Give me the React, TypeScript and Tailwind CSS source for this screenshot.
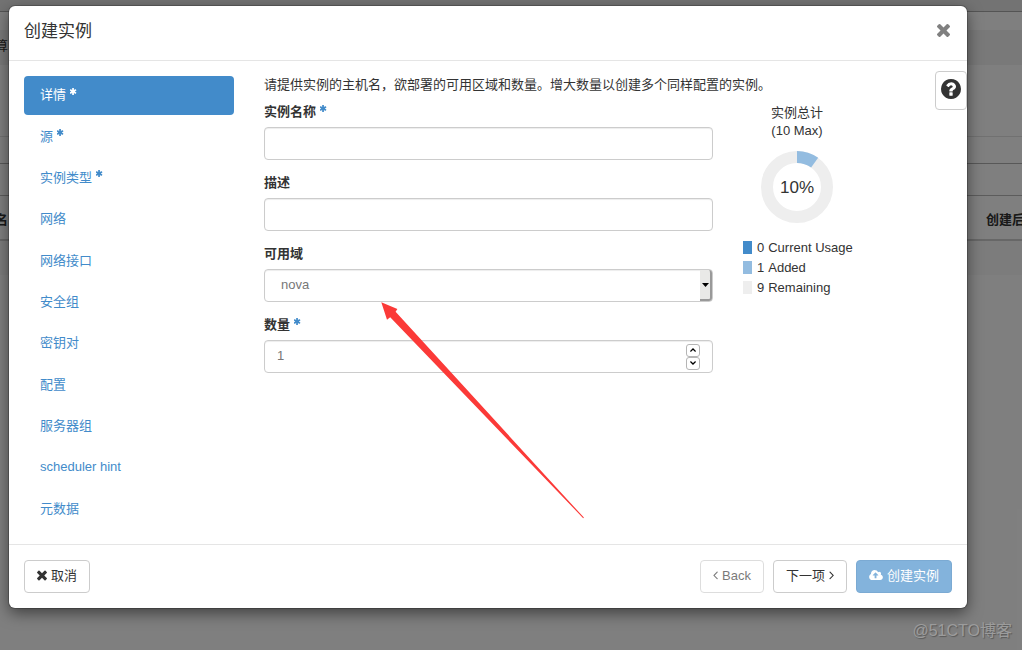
import { useState, type ReactNode } from "react";

const ICONS = {
  times:
    "M1490 1322q0 40-28 68l-136 136q-28 28-68 28t-68-28l-294-294-294 294q-28 28-68 28t-68-28l-136-136q-28-28-28-68t28-68l294-294-294-294q-28-28-28-68t28-68l136-136q28-28 68-28t68 28l294 294 294-294q28-28 68-28t68 28l136 136q28 28 28 68t-28 68l-294 294 294 294q28 28 28 68z",
  question:
    "M1024 1376v-192q0-14-9-23t-23-9h-192q-14 0-23 9t-9 23v192q0 14 9 23t23 9h192q14 0 23-9t9-23zm256-672q0-88-55.5-163t-138.5-116-170-41q-243 0-371 213-15 24 8 42l132 100q7 6 19 6 16 0 25-12 53-68 86-92 34-24 86-24 48 0 85.5 26t37.5 59q0 38-20 61t-68 45q-63 28-115.5 86.5t-52.5 125.5v36q0 14 9 23t23 9h192q14 0 23-9t9-23q0-19 21.5-49.5t54.5-49.5q32-18 49-28.5t46-35 44.5-48 28-60.5 12.5-81zm384 192q0 209-103 385.5t-279.5 279.5-385.5 103-385.5-103-279.5-279.5-103-385.5 103-385.5 279.5-279.5 385.5-103 385.5 103 279.5 279.5 103 385.5z",
  cloud:
    "M1216 864q0-14-9-23l-352-352q-9-9-23-9t-23 9l-351 351q-10 12-10 24 0 14 9 23t23 9h224v352q0 13 9.5 22.5t22.5 9.5h192q13 0 22.5-9.5t9.5-22.5v-352h224q13 0 22.5-9.5t9.5-22.5zm640 288q0 159-112.5 271.5t-271.5 112.5h-1088q-185 0-316.5-131.5t-131.5-316.5q0-130 70-240t188-165q-2-30-2-43 0-212 150-362t362-150q156 0 285.5 87t188.5 231q71-62 166-62 106 0 181 75t75 181q0 76-41 138 130 31 213.5 135.5t83.5 238.5z",
  left: "M1203 544q0 13-10 23l-393 393 393 393q10 10 10 23t-10 23l-50 50q-10 10-23 10t-23-10l-466-466q-10-10-10-23t10-23l466-466q10-10 23-10t23 10l50 50q10 10 10 23z",
  right:
    "M1171 960q0 13-10 23l-466 466q-10 10-23 10t-23-10l-50-50q-10-10-10-23t10-23l393-393-393-393q-10-10-10-23t10-23l50-50q10-10 23-10t23 10l466 466q10 10 10 23z",
  asterisk:
    "M1546 1050q46 26 59.5 77.5t-12.5 97.5l-64 110q-26 46-77.5 59.5t-97.5-12.5l-266-153v307q0 52-38 90t-90 38h-128q-52 0-90-38t-38-90v-307l-266 153q-46 26-97.5 12.5t-77.5-59.5l-64-110q-26-46-12.5-97.5t59.5-77.5l266-154-266-154q-46-26-59.5-77.5t12.5-97.5l64-110q26-46 77.5-59.5t97.5 12.5l266 153v-307q0-52 38-90t90-38h128q52 0 90 38t38 90v307l266-153q46-26 97.5-12.5t77.5 59.5l64 110q26 46 12.5 97.5t-59.5 77.5l-266 154z",
};

function Icon({ name, box = "0 0 1792 1792", className }: { name: keyof typeof ICONS; box?: string; className: string }) {
  return (
    <svg viewBox={box} fill="currentColor" aria-hidden="true" className={className}>
      <path d={ICONS[name]} />
    </svg>
  );
}

function Required({ className }: { className: string }) {
  return <Icon name="asterisk" box="240 140 1512 1512" className={`mb-2 ml-1 size-[7px] ${className}`} />;
}

const STEPS = [
  { label: "详情", required: true },
  { label: "源", required: true },
  { label: "实例类型", required: true },
  { label: "网络" },
  { label: "网络接口" },
  { label: "安全组" },
  { label: "密钥对" },
  { label: "配置" },
  { label: "服务器组" },
  { label: "scheduler hint" },
  { label: "元数据" },
];

const USAGE = [
  { value: 0, label: "Current Usage", swatch: "bg-[#428bca]" },
  { value: 1, label: "Added", swatch: "bg-[#93bce0]" },
  { value: 9, label: "Remaining", swatch: "bg-[#eeeeee]" },
];

const FIELD =
  "h-[33px] w-full rounded-[4px] border border-[#cccccc] bg-white px-3 text-[13px] text-[#777777] shadow-[inset_0_1px_1px_rgba(0,0,0,0.075)] outline-none";

function Field({ id, label, required, children }: { id: string; label: string; required?: boolean; children: ReactNode }) {
  return (
    <div>
      <label htmlFor={id} className="mb-[7px] flex h-4 items-center font-bold">
        {label}
        {required && <Required className="text-[#428bca]" />}
      </label>
      {children}
    </div>
  );
}

function Backdrop() {
  return (
    <div aria-hidden="true" className="absolute inset-0 overflow-hidden">
      <div className="h-3 border-b border-[#a8a8a8] bg-[#e7e7e7]" />
      <div className="h-[18px]" />
      <div className="flex h-[35px] items-center bg-[#f2f2f2] pb-1">
        <span className="flex w-2 justify-end">算</span>
      </div>
      <div className="h-[72px] border-b border-[#e2e2e2]" />
      <div className="h-[27px] border-b border-[#b0b0b0]" />
      <div className="h-8 border-b border-[#b8b8b8]" />
      <div className="flex h-[45px] items-center justify-between border-b-2 border-[#cfcfcf] pt-1 font-bold">
        <span className="flex w-2 justify-end">名</span>
        <span className="w-9 whitespace-nowrap">创建后</span>
      </div>
      <div className="h-[34px] bg-[#f9f9f9]" />
    </div>
  );
}

function Spinner({ onStep }: { onStep: (delta: number) => void }) {
  return (
    <div className="absolute inset-y-0 right-[13px] flex flex-col justify-center">
      {[1, -1].map((delta) => (
        <button
          key={delta}
          type="button"
          aria-label={delta > 0 ? "增加" : "减少"}
          onClick={() => onStep(delta)}
          className="flex h-[13px] w-[14px] items-center justify-center rounded-[3px] border border-[#b5b5b5] bg-white text-black"
        >
          <svg viewBox="0 0 6 4" className="h-1 w-[6px]" fill="none" stroke="currentColor" strokeWidth="1.3">
            <path d={delta > 0 ? "M0.4 3.4 3 1 5.6 3.4" : "M0.4 0.6 3 3 5.6 0.6"} />
          </svg>
        </button>
      ))}
    </div>
  );
}

const BUTTON = "flex h-[33px] items-center gap-1 rounded-[4px] border px-3 pb-[2px]";

export default function App() {
  const [active, setActive] = useState(0);
  const [count, setCount] = useState(1);

  return (
    <div className="relative min-h-screen overflow-hidden bg-white font-['Liberation_Sans','Noto_Sans_CJK_SC',sans-serif] text-[13px] leading-[18px] text-[#333333]">
      <Backdrop />
      <div className="absolute inset-0 bg-black/50" />

      <div className="relative pt-[6px] pr-[55px] pb-10 pl-[9px]">
        <div
          role="dialog"
          aria-labelledby="dialog-title"
          className="relative rounded-[6px] bg-white shadow-[0_5px_15px_rgba(0,0,0,0.5),0_0_0_1px_rgba(0,0,0,0.2)]"
        >
          <header className="flex h-[55px] items-start justify-between border-b border-[#e5e5e5] px-[15px] pt-[13px]">
            <h1 id="dialog-title" className="text-[17px] leading-[26px]">
              创建实例
            </h1>
            <button type="button" aria-label="关闭" className="flex h-[22px] w-[15px] items-center text-[#808080]">
              <Icon name="times" box="302 366 1188 1188" className="size-[13px]" />
            </button>
          </header>

          <div className="relative flex gap-[30px] p-[15px]">
            <nav className="grid min-h-[453px] w-[210px] shrink-0 auto-rows-fr gap-[2px]">
              {STEPS.map((step, i) => (
                <a
                  key={step.label}
                  href="#"
                  onClick={(e) => {
                    e.preventDefault();
                    setActive(i);
                  }}
                  className={`flex items-center rounded-[4px] px-4 pb-px ${i === active ? "bg-[#428bca] text-white" : "text-[#428bca]"}`}
                >
                  {step.label}
                  {step.required && <Required className="" />}
                </a>
              ))}
            </nav>

            <div className="min-w-0 flex-1">
              <p className="mb-[10px]">请提供实例的主机名，欲部署的可用区域和数量。增大数量以创建多个同样配置的实例。</p>
              <div className="flex gap-[30px]">
                <form className="flex min-w-0 flex-1 flex-col gap-[15px]">
                  <Field id="name" label="实例名称" required>
                    <input id="name" type="text" className={FIELD} />
                  </Field>
                  <Field id="description" label="描述">
                    <input id="description" type="text" className={FIELD} />
                  </Field>
                  <Field id="zone" label="可用域">
                    <div className="relative">
                      <select id="zone" defaultValue="nova" className={`${FIELD} appearance-none pb-[2px] pl-4`}>
                        <option value="nova">nova</option>
                      </select>
                      <span className="pointer-events-none absolute inset-y-px right-px flex w-3 items-center justify-center rounded-r-[3px] border-r-2 border-b-2 border-[#999999] bg-[#e9e9e7]">
                        <svg viewBox="0 0 7 4" className="h-1 w-[7px]">
                          <path d="M0 0h7L3.5 4z" fill="#000000" />
                        </svg>
                      </span>
                    </div>
                  </Field>
                  <Field id="count" label="数量" required>
                    <div className="relative">
                      <input
                        id="count"
                        type="number"
                        min={1}
                        value={count}
                        onChange={(e) => setCount(Number(e.target.value))}
                        className={`${FIELD} pb-[2px] [appearance:textfield]`}
                      />
                      <Spinner onStep={(d) => setCount((n) => Math.max(1, n + d))} />
                    </div>
                  </Field>
                </form>

                <aside className="w-[209px] shrink-0">
                  <div className="w-[108px] text-center leading-[18px]">
                    <div>实例总计</div>
                    <div>(10 Max)</div>
                  </div>
                  <div className="mt-[11px] mb-[15px] grid h-[72px] w-[108px] place-items-center">
                    <svg viewBox="0 0 72 72" className="col-start-1 row-start-1 size-[72px]" fill="none" strokeWidth="12">
                      <circle cx="36" cy="36" r="30" stroke="#eeeeee" />
                      <path d="M36 6A30 30 0 0 1 53.634 11.729" stroke="#93bce0" />
                    </svg>
                    <span className="col-start-1 row-start-1 pt-px text-[17px]">10%</span>
                  </div>
                  <ul>
                    {USAGE.map((row) => (
                      <li key={row.label} className="flex h-5 items-center gap-1">
                        <span className={`mr-px mb-px h-[13px] w-[9px] ${row.swatch}`} />
                        <span>{row.value}</span>
                        <span>{row.label}</span>
                      </li>
                    ))}
                  </ul>
                </aside>
              </div>
            </div>

            <button
              type="button"
              aria-label="帮助"
              className="absolute top-[10px] right-0 flex h-[39px] w-8 items-center justify-center rounded-[4px] border border-[#cccccc] bg-white pb-[3px]"
            >
              <Icon name="question" box="128 128 1536 1536" className="size-5" />
            </button>
          </div>

          <footer className="flex items-center gap-[9px] border-t border-[#e5e5e5] p-[15px]">
            <button type="button" className={`${BUTTON} mr-auto border-[#cccccc] bg-white`}>
              <Icon name="times" box="302 302 1188 1316" className="h-[11px] w-[10px]" />
              取消
            </button>
            <button type="button" disabled className={`${BUTTON} border-[#cccccc] bg-white opacity-65`}>
              <Icon name="left" box="584 400 640 1152" className="h-[9px] w-[5px]" />
              Back
            </button>
            <button type="button" className={`${BUTTON} border-[#cccccc] bg-white`}>
              下一项
              <Icon name="right" box="546 400 640 1152" className="h-[9px] w-[5px]" />
            </button>
            <button type="button" disabled className={`${BUTTON} border-[#357ebd] bg-[#428bca] text-white opacity-65`}>
              <Icon name="cloud" box="-64 128 1920 1536" className="h-[11px] w-[14px]" />
              创建实例
            </button>
          </footer>
        </div>
      </div>

      <svg viewBox="0 0 204 218" aria-hidden="true" className="pointer-events-none absolute top-[301px] left-[380px] h-[218px] w-[204px]">
        <path d="M1.3 1.3 17.4 8 15.6 10.8 203.9 216.6 203.2 217.2 10.2 16.3 7 18.7z" fill="#fb3a38" />
      </svg>
      <div className="absolute right-[10px] bottom-[10px] text-base leading-[18px] text-[#9c9c9c] [text-shadow:1px_1px_1px_rgba(0,0,0,0.3)]">
        @51CTO博客
      </div>
    </div>
  );
}
